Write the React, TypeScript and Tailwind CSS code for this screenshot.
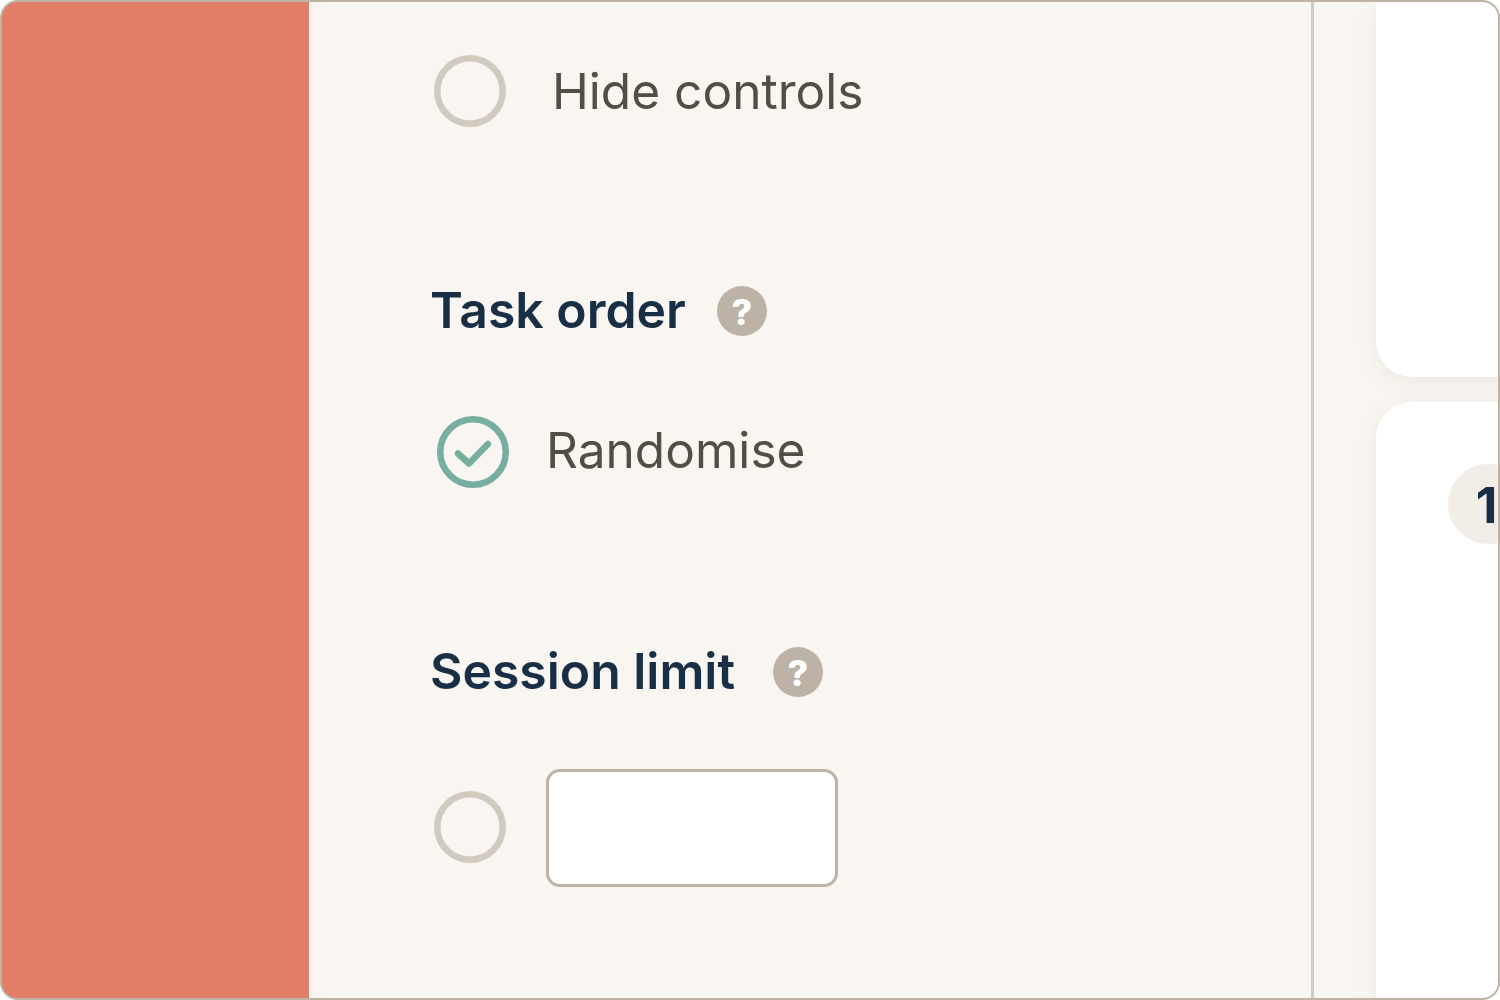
import React from 'react';

const Help: React.FC = () => (
  <span className="flex h-[50px] w-[50px] items-center justify-center rounded-full bg-[#bdb2a6] pt-[2px] text-[36px] font-extrabold leading-none text-white">
    ?
  </span>
);

const Radio: React.FC<{ checked?: boolean }> = ({ checked }) => (
  <svg width="74" height="74" viewBox="0 0 74 74" fill="none" className="shrink-0">
    <circle cx="37" cy="37" r="32.75" strokeWidth="6.5" stroke={checked ? '#78ae9f' : '#d2c9bf'} />
    {checked && (
      <path d="M22 38.5 L33 48.5 L52 29" stroke="#78ae9f" strokeWidth="6.5" strokeLinecap="round" strokeLinejoin="round" />
    )}
  </svg>
);

const Heading: React.FC<{ title: string; gap: string }> = ({ title, gap }) => (
  <div className={`flex items-center ${gap}`}>
    <h3 className="relative top-[-1px] text-[49.9px] font-semibold leading-[58px] text-[#182f45]">{title}</h3>
    <Help />
  </div>
);

export default function App() {
  return (
    <div className="h-[1000px] w-[1500px] overflow-hidden rounded-[18px] bg-[#bfb3a6] p-[2px] font-['Inter',sans-serif]">
      <div className="flex h-full overflow-hidden rounded-[16px]">
        <aside className="w-[307px] shrink-0 bg-[#e27d66]" />
        <main className="w-[1005px] shrink-0 border-r-[3px] border-[#d2c9bf] bg-[#f9f6f1] pl-[121px]">
          <div className="ml-[3px] mt-[52px] flex items-center gap-[45px]">
            <Radio />
            <span className="text-[49.6px] font-normal leading-[58px] text-[#544d43]">Hide controls</span>
          </div>
          <div className="mt-[154px]">
            <Heading title="Task order" gap="gap-[31px]" />
          </div>
          <div className="ml-[6px] mt-[75px] flex items-center gap-[36px]">
            <Radio checked />
            <span className="relative top-[-2px] text-[49.6px] font-normal leading-[58px] text-[#544d43]">Randomise</span>
          </div>
          <div className="mt-[154px]">
            <Heading title="Session limit" gap="gap-[38px]" />
          </div>
          <div className="ml-[3px] mt-[68px] flex items-center gap-[39px]">
            <div className="-mt-[2px]">
              <Radio />
            </div>
            <div className="h-[118px] w-[292px] rounded-[14px] border-[3px] border-[#bfb3a6] bg-white" />
          </div>
        </main>
        <section className="flex min-w-0 flex-1 flex-col gap-[25px] bg-[#f9f6f1] pl-[62px]">
          <div className="h-[375px] w-[300px] shrink-0 rounded-bl-[36px] bg-white shadow-[0_4px_20px_rgba(120,100,80,0.1)]" />
          <div className="h-[700px] w-[300px] shrink-0 rounded-tl-[36px] bg-white pl-[72px] pt-[62px] shadow-[0_4px_20px_rgba(120,100,80,0.1)]">
            <span className="flex h-[80px] w-[80px] items-center justify-center rounded-full bg-[#f2ede7] pr-[3px] pt-[2px] text-[50px] font-bold text-[#182f45]">
              1
            </span>
          </div>
        </section>
      </div>
    </div>
  );
}
